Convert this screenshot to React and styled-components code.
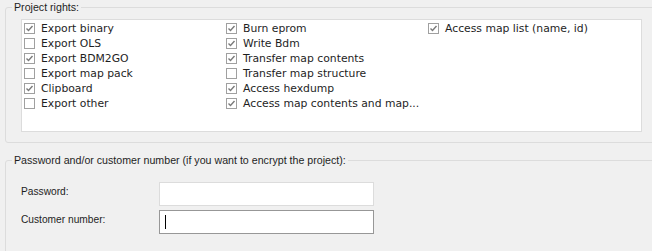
import React from "react";
import styled, { createGlobalStyle } from "styled-components";

const GlobalStyle = createGlobalStyle`
  html, body {
    margin: 0;
    padding: 0;
    background: #f0f0f0;
    overflow: hidden;
  }
  body {
    font-family: "Liberation Sans", Arial, sans-serif;
  }
`;

const Page = styled.div`
  width: 652px;
  height: 251px;
  padding-left: 5px;
  box-sizing: border-box;
  overflow: hidden;
`;

const Group = styled.fieldset`
  width: 660px;
  margin: ${(p) => p.$top || 0}px 0 0 0;
  padding: 0 0 ${(p) => p.$bottom || 0}px 0;
  border: 1px solid #dcdcdc;
  border-radius: 3px;
  box-sizing: border-box;
  min-width: 0;
`;

const Legend = styled.legend`
  margin-left: 6px;
  padding: 0 2px;
  font-size: 10.65px;
  line-height: 14px;
  color: #1e1e1e;
`;

const ListBox = styled.div`
  margin: 5px 0 0 15px;
  width: 621px;
  height: 113px;
  box-sizing: border-box;
  background: #fff;
  border: 1px solid #dcdcdc;
  padding: 1px 0 0 2px;
  display: grid;
  grid-template-columns: repeat(3, 202px);
  grid-template-rows: repeat(6, 15px);
  grid-auto-flow: column;
`;

const Item = styled.label`
  display: flex;
  align-items: center;
  gap: 6px;
  font-family: "DejaVu Sans", Verdana, sans-serif;
  font-size: 10.8px;
  color: #1e1e1e;
  white-space: nowrap;
`;

const Box = styled.span`
  width: 11px;
  height: 11px;
  box-sizing: border-box;
  border: 1px solid #a0a0a0;
  background: #fff;
  display: flex;
  align-items: center;
  justify-content: center;
  flex: none;
`;

const Check = () => (
  <svg width="9" height="9" viewBox="0 0 9 9">
    <path d="M1.5 4.5 L3.5 6.5 L7.5 2" fill="none" stroke="#7a7a7a" strokeWidth="1.4" />
  </svg>
);

const Form = styled.div`
  display: flex;
  flex-direction: column;
  gap: 4px;
  margin: 15px 0 0 15px;
`;

const Row = styled.div`
  display: flex;
  align-items: flex-start;
`;

const Label = styled.span`
  width: 138px;
  padding-top: 3px;
  font-size: 10.2px;
  line-height: 14px;
  color: #1e1e1e;
`;

const Input = styled.div`
  width: 215px;
  height: 24px;
  box-sizing: border-box;
  background: #fff;
  border: 1px solid ${(p) => (p.$focused ? "#979797" : "#dcdcdc")};
  position: relative;
`;

const Caret = styled.span`
  position: absolute;
  left: 5px;
  top: 4px;
  width: 1px;
  height: 14px;
  background: #000;
`;

const rights = [
  ["Export binary", true],
  ["Export OLS", false],
  ["Export BDM2GO", true],
  ["Export map pack", false],
  ["Clipboard", true],
  ["Export other", false],
  ["Burn eprom", true],
  ["Write Bdm", true],
  ["Transfer map contents", true],
  ["Transfer map structure", false],
  ["Access hexdump", true],
  ["Access map contents and map...", true],
  ["Access map list (name, id)", true],
];

export default function App() {
  return (
    <Page>
      <GlobalStyle />
      <Group $bottom={10}>
        <Legend>Project rights:</Legend>
        <ListBox>
          {rights.map(([name, on]) => (
            <Item key={name}>
              <Box>{on && <Check />}</Box>
              {name}
            </Item>
          ))}
        </ListBox>
      </Group>
      <Group $top={10} $bottom={40}>
        <Legend>Password and/or customer number (if you want to encrypt the project):</Legend>
        <Form>
          <Row>
            <Label>Password:</Label>
            <Input />
          </Row>
          <Row>
            <Label>Customer number:</Label>
            <Input $focused>
              <Caret />
            </Input>
          </Row>
        </Form>
      </Group>
    </Page>
  );
}
